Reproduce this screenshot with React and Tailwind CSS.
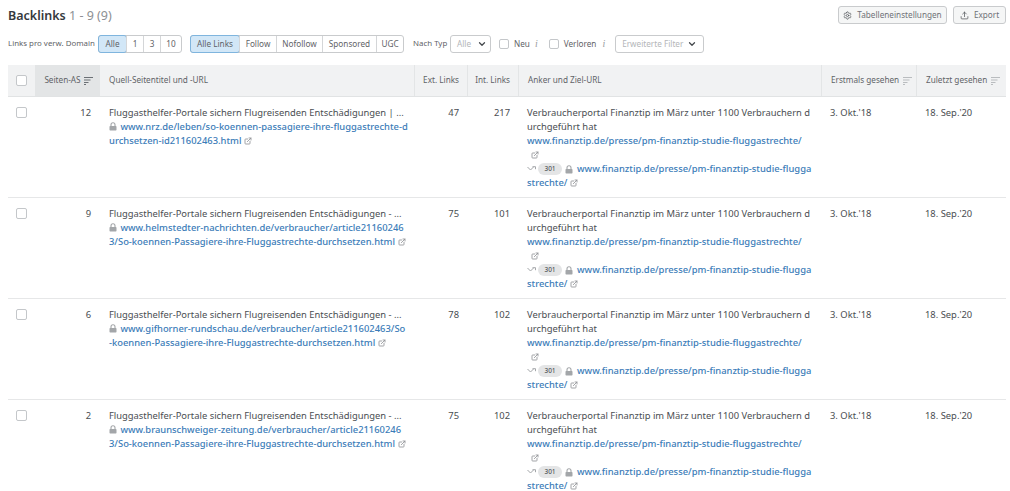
import { ChevronDown, ExternalLink, Settings, Upload } from "lucide-react";

const cols = "grid grid-cols-[27px_65px_314px_53px_51px_303px_95px_90px]";

const rows = [
  {
    as: 12,
    title: "Fluggasthelfer-Portale sichern Flugreisenden Entschädigungen | ...",
    url: ["www.nrz.de/leben/so-koennen-passagiere-ihre-fluggastrechte-d", "urchsetzen-id211602463.html"],
    ext: 47,
    int: 217,
  },
  {
    as: 9,
    title: "Fluggasthelfer-Portale sichern Flugreisenden Entschädigungen - ...",
    url: ["www.helmstedter-nachrichten.de/verbraucher/article21160246", "3/So-koennen-Passagiere-ihre-Fluggastrechte-durchsetzen.html"],
    ext: 75,
    int: 101,
  },
  {
    as: 6,
    title: "Fluggasthelfer-Portale sichern Flugreisenden Entschädigungen - ...",
    url: ["www.gifhorner-rundschau.de/verbraucher/article211602463/So", "-koennen-Passagiere-ihre-Fluggastrechte-durchsetzen.html"],
    ext: 78,
    int: 102,
  },
  {
    as: 2,
    title: "Fluggasthelfer-Portale sichern Flugreisenden Entschädigungen - ...",
    url: ["www.braunschweiger-zeitung.de/verbraucher/article21160246", "3/So-koennen-Passagiere-ihre-Fluggastrechte-durchsetzen.html"],
    ext: 75,
    int: 102,
  },
];

function SortIcon({ active }) {
  return (
    <svg width="9" height="8" viewBox="0 0 9 8" className={active ? "text-[#6b7075]" : "text-[#b9bcbf]"}>
      <path d="M0 .5h9M0 3h6.500M0 5.500h4.500M0 7.500h2" stroke="currentColor" strokeWidth="1" fill="none" />
    </svg>
  );
}

function LockIcon() {
  return (
    <svg width="8" height="9" viewBox="0 0 8 9" className="inline-block shrink-0 text-[#a3a6a9] align-[-0.5px]">
      <path d="M2 4V2.700a2 2 0 0 1 4 0V4" stroke="currentColor" strokeWidth="1.100" fill="none" />
      <rect x="0.500" y="4" width="7" height="4.500" rx="0.700" fill="currentColor" />
    </svg>
  );
}

function Checkbox({ small }) {
  return <span className={`block border border-[#c4c7ca] bg-white rounded-[2px] ${small ? "w-[10px] h-[10px]" : "w-[11px] h-[11px]"}`} />;
}

function InfoMark() {
  return <span className="font-['Liberation_Serif',serif] italic text-[10px] text-[#9a9da0] leading-none">i</span>;
}

function SegGroup({ items }) {
  return (
    <div className="flex h-[18px] rounded-[3px] border border-[#c9cbcd] text-[8.200px] text-[#5f6367]">
      {items.map((item, i) => (
        <span
          key={item.label}
          className={`flex items-center justify-center ${item.w} ${i > 0 ? "border-l border-[#d4d6d8]" : ""} ${
            item.active ? "bg-[#d2e7f7] outline outline-[#7fb5de] rounded-[2px]" : ""
          }`}
        >
          {item.label}
        </span>
      ))}
    </div>
  );
}

function Arrow301() {
  return (
    <span className="flex items-center gap-[2px]">
      <svg width="9" height="6" viewBox="0 0 9 6" className="text-[#a3a6a9]">
        <path d="M.5 1l3 3 3-3M5.500.7h3v2.500" stroke="currentColor" fill="none" strokeWidth="1" />
      </svg>
      <span className="flex items-center justify-center w-[24px] h-[12px] rounded-full bg-[#e4e5e6] text-[6.500px] text-[#55595d]">301</span>
    </span>
  );
}

const linkCls = "font-medium text-[#3b7cb8]";
const ext = <ExternalLink size={8} strokeWidth={2.500} className="inline-block text-[#8f9295] ml-[3px] align-[-1px]" />;

function Row({ row }) {
  return (
    <div className={`${cols} h-[101px] border-b border-[#e6e7e8] text-[9.400px] leading-[14px] text-[#4a4e52]`}>
      <div className="pl-[8px] pt-[10px]">
        <Checkbox />
      </div>
      <div className="pt-[9px] pr-[9px] text-right">{row.as}</div>
      <div className="pt-[9px] pl-[9px] whitespace-nowrap">
        <div>{row.title}</div>
        <div className={linkCls}>
          <LockIcon /> <span className="ml-[1px]">{row.url[0]}</span>
        </div>
        <div className={linkCls}>
          {row.url[1]}
          {ext}
        </div>
      </div>
      <div className="pt-[9px] pr-[8px] text-right">{row.ext}</div>
      <div className="pt-[9px] pr-[8px] text-right">{row.int}</div>
      <div className="pt-[9px] pl-[9px] whitespace-nowrap">
        <div>Verbraucherportal Finanztip im März unter 1100 Verbrauchern d</div>
        <div>urchgeführt hat</div>
        <div className={linkCls}>www.finanztip.de/presse/pm-finanztip-studie-fluggastrechte/</div>
        <div className="pl-[1px]">{ext}</div>
        <div className={`flex items-center gap-[3px] ${linkCls}`}>
          <Arrow301 />
          <LockIcon />
          <span className="ml-[1px]">www.finanztip.de/presse/pm-finanztip-studie-flugga</span>
        </div>
        <div className={linkCls}>
          strechte/
          {ext}
        </div>
      </div>
      <div className="pt-[9px] pl-[9px]">3. Okt.'18</div>
      <div className="pt-[9px] pl-[9px]">18. Sep.'20</div>
    </div>
  );
}

export default function App() {
  return (
    <div className="w-[1010px] h-[491px] overflow-hidden bg-white font-['Noto_Sans',sans-serif] pl-[8px] pr-[4px]">
      <div className="flex justify-between items-start h-[35px] pt-[6px]">
        <h1 className="text-[12.500px] leading-[20px] font-semibold text-[#35393d]">
          Backlinks <span className="font-normal text-[#8d9094]">1 - 9 (9)</span>
        </h1>
        <div className="flex gap-[6px] text-[8.200px] text-[#6f7276]">
          <button className="flex items-center gap-[5px] h-[18px] w-[109px] justify-center border border-[#c9cbcd] rounded-[3px] bg-[#f5f6f6]">
            <Settings size={9} className="text-[#55595d]" />
            Tabelleneinstellungen
          </button>
          <button className="flex items-center gap-[5px] h-[18px] w-[53px] justify-center border border-[#c9cbcd] rounded-[3px] bg-[#f5f6f6]">
            <Upload size={9} className="text-[#55595d]" />
            Export
          </button>
        </div>
      </div>

      <div className="flex items-center h-[18px] text-[8.200px] text-[#5f6367]">
        <span className="w-[90px] text-[7.900px] whitespace-nowrap">Links pro verw. Domain</span>
        <SegGroup
          items={[
            { label: "Alle", w: "w-[27px]", active: true },
            { label: "1", w: "w-[17px]" },
            { label: "3", w: "w-[17px]" },
            { label: "10", w: "w-[21px]" },
          ]}
        />
        <div className="ml-[8px]">
          <SegGroup
            items={[
              { label: "Alle Links", w: "w-[48px]", active: true },
              { label: "Follow", w: "w-[37px]" },
              { label: "Nofollow", w: "w-[46px]" },
              { label: "Sponsored", w: "w-[54px]" },
              { label: "UGC", w: "w-[27px]" },
            ]}
          />
        </div>
        <span className="ml-[9px] w-[37px] text-[7.900px] whitespace-nowrap">Nach Typ</span>
        <div className="flex items-center justify-between w-[41px] h-[18px] pl-[6px] pr-[3px] border border-[#c9cbcd] rounded-[3px] text-[#b4b6b9]">
          Alle
          <ChevronDown size={10} strokeWidth={3} className="text-[#44484c]" />
        </div>
        <span className="ml-[8px] mr-[5px]">
          <Checkbox small />
        </span>
        <span>Neu</span>
        <span className="ml-[5px]">
          <InfoMark />
        </span>
        <span className="ml-[11px] mr-[5px]">
          <Checkbox small />
        </span>
        <span>Verloren</span>
        <span className="ml-[6px]">
          <InfoMark />
        </span>
        <div className="ml-[10px] flex items-center justify-between w-[89px] h-[18px] pl-[6px] pr-[6px] border border-[#c9cbcd] rounded-[3px] text-[#b4b6b9] whitespace-nowrap">
          Erweiterte Filter
          <ChevronDown size={10} strokeWidth={3} className="text-[#44484c]" />
        </div>
      </div>

      <div className={`${cols} mt-[12px] h-[32px] bg-[#f1f2f3] border-b border-[#e1e3e4] text-[8.200px] text-[#5f6367]`}>
        <div className="flex items-center pl-[8px]">
          <Checkbox />
        </div>
        <div className="flex items-center justify-center gap-[3px] pl-[2px] bg-[#e3e5e6]">
          Seiten-AS <SortIcon active />
        </div>
        <div className="flex items-center pl-[9px]">Quell-Seitentitel und -URL</div>
        <div className="flex items-center justify-end pr-[8px] border-l border-[#e3e5e6]">Ext. Links</div>
        <div className="flex items-center justify-end pr-[8px] border-l border-[#e3e5e6]">Int. Links</div>
        <div className="flex items-center pl-[9px] border-l border-[#e3e5e6]">Anker und Ziel-URL</div>
        <div className="flex items-center gap-[4px] pl-[9px] border-l border-[#e3e5e6] whitespace-nowrap">
          Erstmals gesehen <SortIcon />
        </div>
        <div className="flex items-center gap-[4px] pl-[9px] border-l border-[#e3e5e6] whitespace-nowrap">
          Zuletzt gesehen <SortIcon />
        </div>
      </div>

      {rows.map((row, i) => (
        <Row key={i} row={row} />
      ))}
    </div>
  );
}
